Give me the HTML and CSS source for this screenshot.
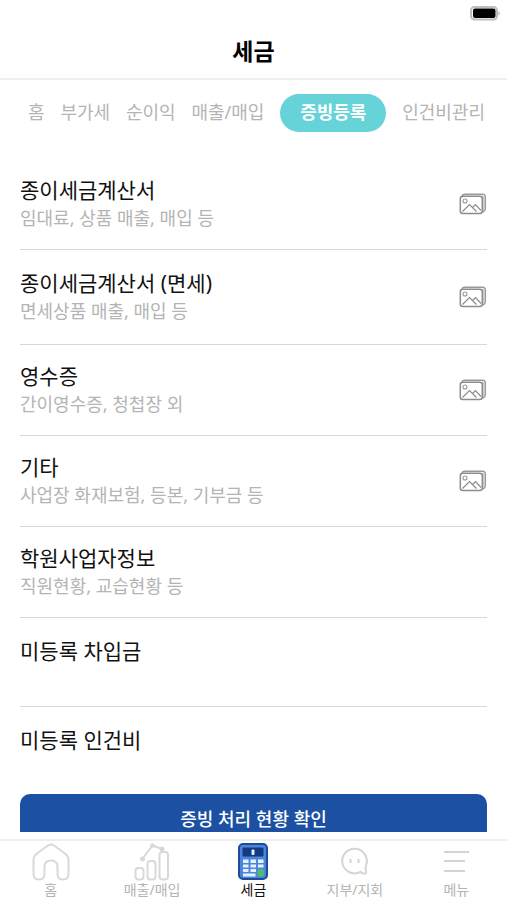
FILE: index.html
```html
<!DOCTYPE html>
<html lang="ko">
<head>
<meta charset="utf-8">
<meta name="viewport" content="width=device-width, initial-scale=1">
<title>세금</title>
<link rel="stylesheet" href="styles.css">
</head>
<body>
<svg class="defs" width="0" height="0" aria-hidden="true">
  <symbol id="gallery" viewBox="0 0 28 22">
    <path d="M3 3 Q3.500 1.200 6 1.200 H23.500 Q26.300 1.200 26.300 4 V15.500 Q26.300 18 24 19" fill="none" stroke="#999" stroke-width="1.500"/>
    <path d="M23 3 Q24.800 3.500 24.800 5.500 V18" fill="none" stroke="#bbb" stroke-width="1"/>
    <rect x="1.300" y="3.200" width="22" height="17.300" rx="2.500" fill="#fff" stroke="#8c8c8c" stroke-width="1.500"/>
    <circle cx="6" cy="8" r="2" fill="none" stroke="#999" stroke-width="1.100"/>
    <path d="M3.500 18.500 L10.500 11.500 L17.500 18.500 M13.500 14.500 L16.500 11.500 L22 17.500" fill="none" stroke="#8c8c8c" stroke-width="1.200"/>
  </symbol>
</svg>
<div class="app">
  <div class="status">
    <svg width="32" height="16" viewBox="0 0 32 16" role="img" aria-label="배터리">
      <rect x="1" y="1" width="26" height="12.500" rx="3.500" fill="#fff" stroke="#bdbdbd" stroke-width="2"/>
      <rect x="3" y="2.500" width="22.500" height="9.500" rx="2" fill="#000"/>
      <path d="M28.500 5 Q31 7.250 28.500 9.500 Z" fill="#aaa"/>
    </svg>
  </div>
  <header class="header"><h1>세금</h1></header>
  <nav class="tabs" aria-label="세금 메뉴">
    <a href="#home">홈</a>
    <a href="#vat">부가세</a>
    <a href="#profit">순이익</a>
    <a href="#sales">매출/매입</a>
    <a href="#proof" class="active" aria-current="page">증빙등록</a>
    <a href="#labor">인건비관리</a>
  </nav>
  <main class="content">
    <ul class="list">
      <li class="row">
        <div><h2>종이세금계산서</h2><p>임대료, 상품 매출, 매입 등</p></div>
        <button type="button" class="pick" aria-label="종이세금계산서 사진"><svg width="28" height="22"><use href="#gallery"/></svg></button>
      </li>
      <li class="row roomy">
        <div><h2>종이세금계산서 (면세)</h2><p>면세상품 매출, 매입 등</p></div>
        <button type="button" class="pick" aria-label="면세 계산서 사진"><svg width="28" height="22"><use href="#gallery"/></svg></button>
      </li>
      <li class="row">
        <div><h2>영수증</h2><p>간이영수증, 청첩장 외</p></div>
        <button type="button" class="pick" aria-label="영수증 사진"><svg width="28" height="22"><use href="#gallery"/></svg></button>
      </li>
      <li class="row">
        <div><h2>기타</h2><p>사업장 화재보험, 등본, 기부금 등</p></div>
        <button type="button" class="pick" aria-label="기타 사진"><svg width="28" height="22"><use href="#gallery"/></svg></button>
      </li>
      <li class="row">
        <div><h2>학원사업자정보</h2><p>직원현황, 교습현황 등</p></div>
      </li>
      <li class="row single"><h2>미등록 차입금</h2></li>
      <li class="row single"><h2>미등록 인건비</h2></li>
    </ul>
    <button type="button" class="submit">증빙 처리 현황 확인</button>
  </main>
  <nav class="bottom" aria-label="하단 메뉴">
    <a href="#home">
      <svg width="40" height="38" viewBox="0 0 40 38" fill="none" stroke="#d9d9d9" stroke-width="2">
        <path d="M17 2.500 Q20 0.500 23 2.500 L34 10.500 Q37.500 13 37.500 17 V31 Q37.500 36.500 32 36.500 Q26.500 36.500 26.500 31 V24 Q26.500 17.500 20 17.500 Q13.500 17.500 13.500 24 V31 Q13.500 36.500 8 36.500 Q2.500 36.500 2.500 31 V17 Q2.500 13 6 10.500 Z"/>
      </svg>
      <span>홈</span>
    </a>
    <a href="#sales">
      <svg width="40" height="38" viewBox="0 0 40 38" fill="none" stroke="#d9d9d9" stroke-width="2">
        <rect x="3.500" y="25" width="8" height="11.500" rx="3"/>
        <rect x="15.500" y="18" width="8" height="18.500" rx="3"/>
        <rect x="27.500" y="9" width="8.500" height="27.500" rx="3"/>
        <path d="M10.500 15.500 L20.500 2.500 L30 6"/>
        <circle cx="10.500" cy="16" r="1.500" fill="#d0d0d0"/>
        <circle cx="20.500" cy="2.500" r="1.200" fill="#d0d0d0"/>
        <circle cx="30" cy="6" r="1.500" fill="#d0d0d0"/>
      </svg>
      <span>매출/매입</span>
    </a>
    <a href="#tax" class="active" aria-current="page">
      <svg width="40" height="38" viewBox="0 0 40 38">
        <rect x="6" y="1" width="28" height="35" rx="4" fill="#4b86dc" stroke="#1d4a99" stroke-width="2"/>
        <rect x="9.500" y="4.500" width="21" height="9" rx="1" fill="#123a82"/>
        <rect x="18.500" y="6.500" width="3" height="5.500" rx="1" fill="#e4efff"/>
        <g fill="#e8f2ff">
          <rect x="10" y="16.500" width="5.500" height="3.500"/><rect x="17.500" y="16.500" width="5.500" height="3.500"/><rect x="25" y="16.500" width="5.500" height="3.500"/>
          <rect x="10" y="21.500" width="5.500" height="3"/><rect x="17.500" y="21.500" width="5.500" height="3"/><rect x="25" y="21.500" width="5.500" height="3"/>
          <rect x="10" y="26" width="5.500" height="3"/><rect x="17.500" y="26" width="5.500" height="3"/>
          <rect x="10" y="30.500" width="12.500" height="3"/>
        </g>
        <rect x="24.500" y="26" width="6.500" height="7.500" rx="2" fill="#4dbb72"/>
      </svg>
      <span>세금</span>
    </a>
    <a href="#branch">
      <svg width="40" height="38" viewBox="0 0 40 38" fill="none" stroke="#d4d4d4" stroke-width="2">
        <path d="M25.500 28.800 A12.300 12.300 0 1 1 31 22.500 Q30 25 31 28 Q31.800 31.500 28.500 30.500 Q26.500 30 25.500 28.800 Z"/>
        <path d="M15.500 16 V20 M23.500 16 V20"/>
      </svg>
      <span>지부/지회</span>
    </a>
    <a href="#menu">
      <svg width="40" height="38" viewBox="0 0 40 38" stroke="#d4d4d4" stroke-width="2">
        <path d="M8 9 H33 M8 18 H29 M8 28 H29"/>
      </svg>
      <span>메뉴</span>
    </a>
  </nav>
</div>
</body>
</html>
```
FILE: styles.css
```css
* {
  box-sizing: border-box;
}

body {
  margin: 0;
  background: #fff;
  color: #111;
  font-family: "Noto Sans", "Noto Sans CJK KR", sans-serif;
}

h1, h2, p, ul {
  margin: 0;
  padding: 0;
}

a {
  color: inherit;
  text-decoration: none;
}

button {
  border: 0;
  font-family: inherit;
  cursor: pointer;
}

.defs {
  position: absolute;
}

.app {
  display: flex;
  flex-direction: column;
  height: 100vh;
}

.status {
  display: flex;
  justify-content: flex-end;
  padding: 6px 5px 0;
  height: 24px;
}

.header {
  padding: 10px 0;
  border-bottom: 2px solid #eee;
  text-align: center;
}

.header h1 {
  font-size: 23px;
  line-height: 34px;
  font-weight: 700;
  color: #000;
}

.tabs {
  display: flex;
  align-items: center;
  justify-content: space-between;
  padding: 14px 22px 0 28px;
  font-size: 18px;
  line-height: 36px;
  white-space: nowrap;
  color: #b4b4b4;
}

.tabs a {
  padding-bottom: 2px;
}

.tabs .active {
  padding: 0 20px 2px;
  border-radius: 19px;
  background: #66d3d8;
  color: #fff;
  font-weight: 700;
}

.content {
  flex: 1;
  min-height: 0;
  overflow: hidden;
  padding: 27px 20px 0;
}

.list {
  list-style: none;
}

.row {
  display: flex;
  align-items: center;
  justify-content: space-between;
  padding: 17px 0;
  border-bottom: 1px solid #d8d8d8;
}

.row.roomy {
  padding: 19px 0;
}

.row.single {
  align-items: flex-start;
  min-height: 89px;
  padding: 19px 0;
}

.row.single:last-child {
  min-height: 87px;
  border-bottom: 0;
}

.row h2 {
  font-size: 21px;
  line-height: 28px;
  font-weight: 400;
}

.row p {
  font-size: 18px;
  line-height: 28px;
  color: #b4b4b4;
}

.pick {
  display: flex;
  padding: 0;
  background: none;
}

.submit {
  display: block;
  width: 100%;
  height: 48px;
  border-radius: 10px;
  background: #1c50a3;
  color: #fff;
  font-size: 18px;
  font-weight: 500;
}

.bottom {
  display: grid;
  grid-template-columns: repeat(5, 1fr);
  margin-top: 7px;
  padding: 2px 0 1px;
  border-top: 2px solid #eee;
  font-size: 14px;
  line-height: 18px;
  color: #b4b4b4;
}

.bottom a {
  display: flex;
  flex-direction: column;
  align-items: center;
}

.bottom .active {
  color: #111;
}
```
